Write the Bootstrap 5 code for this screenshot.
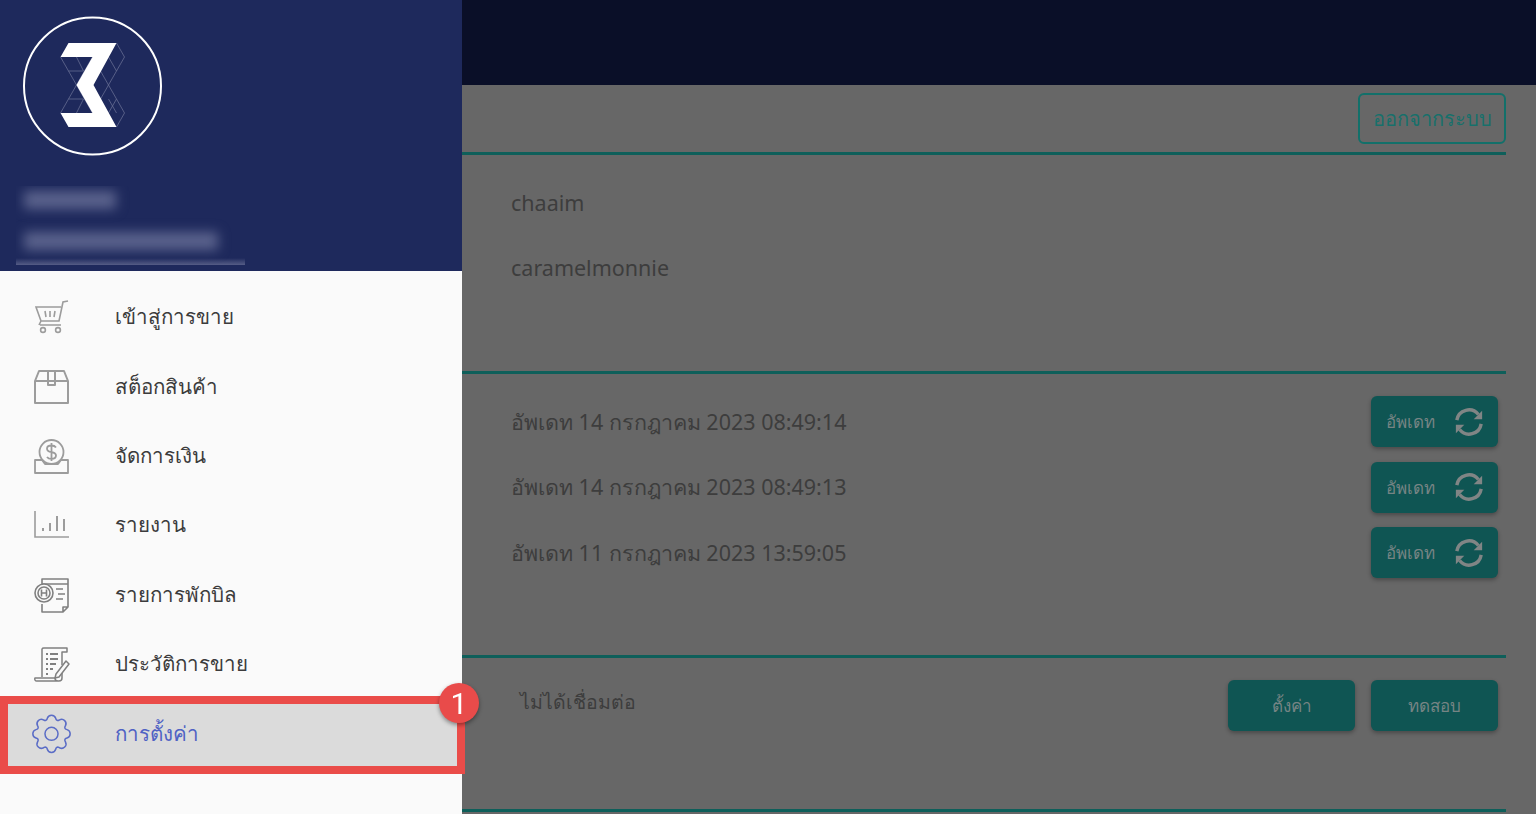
<!DOCTYPE html>
<html lang="en">
<head>
  <meta charset="UTF-8">
  <meta name="viewport" content="width=device-width, initial-scale=1">
  <title>Settings</title>
  <link href="https://cdn.jsdelivr.net/npm/bootstrap@5.3.3/dist/css/bootstrap.min.css" rel="stylesheet">
  <style>
    body { background: #676767; font-family: "Noto Sans", "Open Sans", sans-serif; overflow: hidden; }

    /* side drawer */
    .drawer { --bs-offcanvas-width: 462px; --bs-offcanvas-bg: #fafafa; --bs-offcanvas-border-width: 0; }
    .drawer-head { height: 271px; background: #1e295c; padding: 16px 16px 0; }
    .drawer-logo { display: block; margin-left: 6px; }
    .blur-name { height: 79px; width: 229px; margin-top: 30px; overflow: hidden; }
    .blur-bar { display: block; background: #5a628c; filter: blur(6px); margin-left: 8px; }
    .blur-one { width: 92px; height: 18px; margin-top: 5px; }
    .blur-two { width: 194px; height: 18px; margin-top: 23px; }
    .blur-strip { height: 8px; background: linear-gradient(transparent, #5d648c); margin-top: 8px; }
    .drawer-menu { padding-top: 12px; }
    .menu-row { height: 69.4px; color: #3c3c3c; font-size: 20.5px; font-weight: 500; text-decoration: none; padding-left: 34px; gap: 46px; }
    .menu-row svg { width: 35px; height: 35px; flex: none; color: #9c9c9c; overflow: visible; }
    .menu-row span { margin-bottom: 2px; }
    .menu-active { background: #dbdbdb; color: #4f62c4; position: relative; }
    .menu-active svg { color: #5b6dc6; }
    .menu-mark { position: absolute; left: 0; right: -3px; top: -3px; bottom: -5px; border: 8px solid #ea4c49; pointer-events: none; }
    .menu-num { position: absolute; left: 439px; top: -16px; width: 40px; height: 40px; border-radius: 50%; background: #e94b4a; color: #fff; font-family: "Roboto", sans-serif; font-size: 30px; font-weight: 400; box-shadow: 0 2px 4px rgba(0,0,0,.4); z-index: 2; }

    /* page behind the drawer */
    .top-bar { height: 85px; background: #0a0f28; }
    .page-body { margin-left: 462px; padding-right: 30px; color: #3d3d3d; font-size: 21.5px; }
    .part { border-bottom: 3px solid #0e5f5a; }
    .part-logout { padding: 8px 0; }
    .part-profile { height: 219px; padding: 15px 49px 0; }
    .part-updates { height: 284px; padding: 15px 8px 0 49px; }
    .part-printer { height: 154px; padding: 22px 8px 0 58px; }
    .info-row { height: 65.5px; }
    .btn-out { width: 148px; height: 51px; padding: 0; border: 2px solid #12706a; color: #17706b; font-size: 20px; border-radius: 6px; }
    .btn-teal { width: 127px; height: 51px; padding: 0; background: #0f5553; color: #768484; font-size: 17px; border: 0; border-radius: 6px; box-shadow: 0 2px 4px rgba(0,0,0,.3); }
    .btn-icon { gap: 19px; }
    .printer-text { font-size: 19.5px; line-height: 44px; }
    .gear-line { fill: none; stroke: currentColor; stroke-width: .65; }
  </style>
</head>
<body>

<div class="top-bar"></div>

<div class="page-body">
  <div class="part part-logout d-flex justify-content-end">
    <button type="button" class="btn btn-out">ออกจากระบบ</button>
  </div>
  <div class="part part-profile">
    <div class="info-row d-flex align-items-center">chaaim</div>
    <div class="info-row d-flex align-items-center">caramelmonnie</div>
  </div>
  <div class="part part-updates">
    <div class="info-row d-flex align-items-center justify-content-between">
      <span>อัพเดท 14 กรกฎาคม 2023 08:49:14</span>
      <button type="button" class="btn btn-teal btn-icon d-flex align-items-center justify-content-center">อัพเดท
        <svg width="30" height="30" viewBox="0 0 32 32" fill="none" stroke="#808585" stroke-width="3.6"><path d="M3 14a13 13 0 0 1 23-6"/><path d="M29 18a13 13 0 0 1-23 6"/><path d="M30 4v9h-9z" fill="#808585" stroke="none"/><path d="M2 28v-9h9z" fill="#808585" stroke="none"/></svg>
      </button>
    </div>
    <div class="info-row d-flex align-items-center justify-content-between">
      <span>อัพเดท 14 กรกฎาคม 2023 08:49:13</span>
      <button type="button" class="btn btn-teal btn-icon d-flex align-items-center justify-content-center">อัพเดท
        <svg width="30" height="30" viewBox="0 0 32 32" fill="none" stroke="#808585" stroke-width="3.6"><path d="M3 14a13 13 0 0 1 23-6"/><path d="M29 18a13 13 0 0 1-23 6"/><path d="M30 4v9h-9z" fill="#808585" stroke="none"/><path d="M2 28v-9h9z" fill="#808585" stroke="none"/></svg>
      </button>
    </div>
    <div class="info-row d-flex align-items-center justify-content-between">
      <span>อัพเดท 11 กรกฎาคม 2023 13:59:05</span>
      <button type="button" class="btn btn-teal btn-icon d-flex align-items-center justify-content-center">อัพเดท
        <svg width="30" height="30" viewBox="0 0 32 32" fill="none" stroke="#808585" stroke-width="3.6"><path d="M3 14a13 13 0 0 1 23-6"/><path d="M29 18a13 13 0 0 1-23 6"/><path d="M30 4v9h-9z" fill="#808585" stroke="none"/><path d="M2 28v-9h9z" fill="#808585" stroke="none"/></svg>
      </button>
    </div>
  </div>
  <div class="part part-printer d-flex justify-content-between align-items-start">
    <span class="printer-text">ไม่ได้เชื่อมต่อ</span>
    <div class="d-flex gap-3">
      <button type="button" class="btn btn-teal">ตั้งค่า</button>
      <button type="button" class="btn btn-teal">ทดสอบ</button>
    </div>
  </div>
</div>

<!-- Drawer -->
<div class="offcanvas offcanvas-start show drawer" data-bs-backdrop="false" data-bs-scroll="true">
  <div class="drawer-head">
    <svg class="drawer-logo" width="140" height="140" viewBox="21.500 15 140 140" fill="none">
      <circle cx="92" cy="85" r="68.5" stroke="#fff" stroke-width="2"/>
      <path stroke="#6f7699" stroke-width=".7" d="M60 56l32 56M60 112l32-56M76 56l7 14M68 70h15M68 98h15M76 112l7-14M116 42l8 14-8 14-8-14M100 70l24 42-8 14M108 98l8 14M116 98l-8 14M100 98l16-28"/>
      <path d="M60 56l8-14h48L93 84l23 42H68l-8-14h32L76 84l16-28z" fill="#fff"/>
    </svg>
    <div class="blur-name">
      <span class="blur-bar blur-one"></span>
      <span class="blur-bar blur-two"></span>
      <div class="blur-strip"></div>
    </div>
  </div>
  <div class="drawer-menu">
    <a href="#" class="menu-row d-flex align-items-center">
      <svg viewBox="0 0 35 35" fill="none" stroke="currentColor" stroke-width="1.6"><path d="M34 1l-5 1-4 19H7L2 7h25M6 25h21M7 21l-2 4"/><path d="M11 11l1 6M16 11v6M21 11l-1 6"/><circle cx="9" cy="30" r="2.4"/><circle cx="24" cy="30" r="2.4"/></svg>
      <span>เข้าสู่การขาย</span>
    </a>
    <a href="#" class="menu-row d-flex align-items-center">
      <svg viewBox="0 0 35 35" fill="none" stroke="currentColor" stroke-width="2" stroke-linejoin="round"><path d="M1 11l4-10h25l4 10v22H1zM1 11h33M14 1v14h7V1"/></svg>
      <span>สต็อกสินค้า</span>
    </a>
    <a href="#" class="menu-row d-flex align-items-center">
      <svg viewBox="0 0 35 35" fill="none" stroke="currentColor" stroke-width="1.8" stroke-linejoin="round"><circle cx="17.5" cy="13" r="12"/><path d="M22 8.500c-1-1.500-2.500-2-4.500-2-2.500 0-4.500 1.300-4.500 3.300s2 3 4.500 3.400 4.500 1.400 4.500 3.400-2 3.300-4.500 3.300c-2 0-3.500-.5-4.500-2M17.500 4v18"/><path d="M8 21H1v13h33V21h-7l-3 4H11z" fill="#fafafa"/></svg>
      <span>จัดการเงิน</span>
    </a>
    <a href="#" class="menu-row d-flex align-items-center">
      <svg viewBox="0 0 35 35" fill="none" stroke="currentColor" stroke-width="1.6"><path d="M1 3v26h34"/><path d="M9 23v-3M16 23v-8M23 23V8M30 23V11" stroke-width="2"/></svg>
      <span>รายงาน</span>
    </a>
    <a href="#" class="menu-row d-flex align-items-center">
      <svg viewBox="0 0 35 35" fill="none" stroke="#808080" stroke-width="1.6" stroke-linejoin="round"><path d="M8 8V1h26v28l-5 5H8v-8M34 29h-5v5"/><path d="M8 6h26M22 11h7M24 16h7M22 21h7" /><circle cx="10" cy="15" r="9" fill="#fafafa"/><circle cx="10" cy="15" r="6"/><path d="M7.500 11.500v7M12.500 11.500v7M7.500 15h5"/></svg>
      <span>รายการพักบิล</span>
    </a>
    <a href="#" class="menu-row d-flex align-items-center">
      <svg viewBox="0 0 35 35" fill="none" stroke="#808080" stroke-width="1.5" stroke-linejoin="round"><path d="M8 30V2a2 2 0 0 1 2-1h23v4h-5v13M28 26v5a3 3 0 0 1-3 3H3a2 2 0 0 1-2-3h20a3 3 0 0 0 3 3"/><path d="M12 7h2M16 7h8M12 12h2M16 12h8M12 17h2M16 17h6M12 22h2M16 22h3M12 27h2" stroke-width="2"/><path d="M22 27l-1 4 4-1 10-13-3-3z"/></svg>
      <span>ประวัติการขาย</span>
    </a>
    <a href="#" class="menu-row menu-active d-flex align-items-center">
      <svg viewBox="0.500 .8 15 15"><circle class="gear-line" cx="8" cy="8" r="2.800"/><path class="gear-line" d="M9.796 1.343c-.527-1.790-3.065-1.790-3.592 0l-.094.319a.873.873 0 0 1-1.255.520l-.292-.160c-1.640-.892-3.433.902-2.540 2.541l.159.292a.873.873 0 0 1-.520 1.255l-.319.094c-1.790.527-1.790 3.065 0 3.592l.319.094a.873.873 0 0 1 .520 1.255l-.160.292c-.892 1.640.901 3.434 2.541 2.540l.292-.159a.873.873 0 0 1 1.255.520l.094.319c.527 1.790 3.065 1.790 3.592 0l.094-.319a.873.873 0 0 1 1.255-.520l.292.160c1.640.893 3.434-.902 2.540-2.541l-.159-.292a.873.873 0 0 1 .520-1.255l.319-.094c1.790-.527 1.790-3.065 0-3.592l-.319-.094a.873.873 0 0 1-.520-1.255l.160-.292c.893-1.640-.902-3.433-2.541-2.540l-.292.159a.873.873 0 0 1-1.255-.520l-.094-.319z"/></svg>
      <span>การตั้งค่า</span>
      <div class="menu-mark"></div>
      <div class="menu-num d-flex align-items-center justify-content-center">1</div>
    </a>
  </div>
</div>

<script src="https://cdn.jsdelivr.net/npm/bootstrap@5.3.3/dist/js/bootstrap.bundle.min.js"></script>
</body>
</html>
